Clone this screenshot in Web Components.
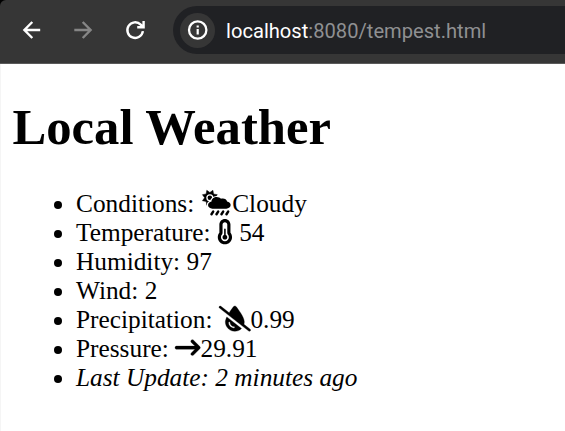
<!DOCTYPE html>
<html lang="en">
<head>
<meta charset="utf-8">
<title>Local Weather</title>
<style>
html,body{margin:0;height:100%;background:#fff;overflow:hidden}
</style>
</head>
<body>
<weather-window></weather-window>
<script>
const define = (name, html) => customElements.define(name, class extends HTMLElement {
  connectedCallback() {
    if (this.shadowRoot) return;
    this.attachShadow({mode: 'open'}).innerHTML = html;
  }
});

const glyphs = {
  cloud: [640, `<path d="M221 14L234 89L309 102L265 164L309 226L234 239L221 314L159 270L97 314L84 239L9 226L53 164L9 102L84 89L97 14L159 58z" transform="translate(20 -8)" stroke="#000" stroke-width="10" stroke-linejoin="round"/>
   <circle cx="179" cy="156" r="72" fill="#fff"/><circle cx="179" cy="156" r="46"/>
   <path d="M510.500 225.500c-6.900-37.200-39.300-65.500-78.500-65.500-12.300 0-23.900 3-34.300 8-17.400-24.100-45.600-40-77.700-40-53 0-96 43-96 96 0 .5.2 1.100.2 1.600C187.600 233 160 265.200 160 304c0 44.200 35.800 80 80 80h256c44.200 0 80-35.800 80-80 0-39.200-28.200-71.700-65.500-78.500z" transform="translate(-34 24) scale(1.1 .92)" stroke="#fff" stroke-width="44" paint-order="stroke"/>
   <path d="M246 436l-34 54M347 436l-34 54M448 436l-34 54M549 436l-34 54" fill="none" stroke="#000" stroke-width="50" stroke-linecap="round"/>`],
  temp: [320, `<path fill-rule="evenodd" d="M160 64c-26.500 0-48 21.500-48 48V276.500c0 17.300-7.100 31.900-15.300 42.500C86.200 332.600 80 349.500 80 368c0 44.200 35.800 80 80 80s80-35.800 80-80c0-18.500-6.200-35.400-16.700-48.900c-8.200-10.600-15.300-25.200-15.300-42.500V112c0-26.500-21.500-48-48-48zM48 112C48 50.200 98.100 0 160 0s112 50.100 112 112V276.500c0 .1 .1 .3 .2 .6c.2 .6 .8 1.600 1.700 2.800c18.900 24.400 30.100 55 30.100 88.100c0 79.500-64.500 144-144 144S16 447.500 16 368c0-33.200 11.200-63.800 30.100-88.100c.9-1.200 1.500-2.200 1.700-2.800c.1-.3 .2-.5 .2-.6V112z"/><path d="M208 368c0 26.500-21.500 48-48 48s-48-21.500-48-48c0-20.900 13.400-38.700 32-45.300V208c0-8.800 7.200-16 16-16s16 7.200 16 16V322.700c18.600 6.600 32 24.400 32 45.300z"/>`],
  drop: [640, `<path fill-rule="evenodd" d="M320 512c53.200 0 101.400-21.600 136.100-56.600l-298.300-235C140 257.100 128 292.300 128 320c0 106 86 192 192 192zM505.200 370.700c4.400-16.200 6.800-33.100 6.800-50.700c0-91.200-130.200-262.300-166.600-308.300C339.400 4.200 330.500 0 320.900 0h-1.800c-9.600 0-18.500 4.200-24.500 11.700C277.800 33 240.700 81.300 205.800 136L38.800 5.100C28.400-3.100 13.300-1.200 5.100 9.200S-1.200 34.700 9.200 42.900l592 464c10.400 8.200 25.500 6.300 33.700-4.100s6.300-25.500-4.100-33.700L505.200 370.700zM224 336c0 44.200 35.800 80 80 80c8.800 0 16 7.200 16 16s-7.200 16-16 16c-61.900 0-112-50.100-112-112c0-8.800 7.200-16 16-16s16 7.200 16 16z" stroke="#000" stroke-width="6"/>`],
  arrow: [512, `<path d="M502.600 278.600c12.500-12.500 12.500-32.800 0-45.300l-128-128c-12.500-12.500-32.800-12.500-45.300 0s-12.500 32.800 0 45.300L402.700 224 32 224c-17.700 0-32 14.300-32 32s14.300 32 32 32l370.700 0-73.400 73.400c-12.500 12.500-12.500 32.800 0 45.300s32.800 12.500 45.300 0l128-128z" stroke="#000" stroke-width="6"/>`]
};

customElements.define('weather-icon', class extends HTMLElement {
  connectedCallback() {
    if (this.shadowRoot) return;
    const [w, body] = glyphs[this.getAttribute('name')];
    this.attachShadow({mode: 'open'}).innerHTML = `<style>
      :host{display:inline-block;height:1em;width:${w / 512}em;vertical-align:-.125em;line-height:1}
      svg{display:block;width:100%;height:100%;overflow:visible}</style>
      <svg viewBox="0 0 ${w} 512">${body}</svg>`;
  }
});

define('address-bar', `<style>
  :host{display:flex;align-items:center;box-sizing:border-box;height:48px;width:420px;padding-left:7px;border-radius:24px;background:#202124;font:20.150px/48px Roboto,sans-serif;color:#8f9092;white-space:pre}
  .info{display:flex;align-items:center;justify-content:center;width:35px;height:35px;border-radius:50%;background:#363636;margin-right:11px}
  svg{display:block}
  ::slotted(b){font-weight:400;color:#fff}
  .url{display:block;padding-top:1px}
  </style><span class="info"><svg width="22" height="22" viewBox="0 0 22 22"><circle cx="10.700" cy="11" r="8.700" fill="none" stroke="#fff" stroke-width="2.300"/><path d="M9.600 10h2.200v5.500H9.600zM9.600 6.400h2.200v2.200H9.600z" fill="#fff"/></svg></span><span class="url"><slot></slot></span>`);

define('browser-toolbar', `<style>
  :host{display:flex;align-items:center;box-sizing:border-box;height:64px;padding:0 0 3px 20px;background:#363636;border-bottom:1px solid #5a5a5a;border-top-left-radius:6px;overflow:hidden}
  svg{display:block;flex:none;fill:none;stroke:#fff;stroke-width:2.400}
  .back{margin-right:28px}.fwd{stroke:#868686;margin-right:28px}.reload{margin-right:25px}
  address-bar{flex:none}
  </style>
  <svg class="back" width="24" height="24" viewBox="0 0 24 24"><path d="M20.200 12H4.500M12.300 4L4.400 12l7.900 8"/></svg>
  <svg class="fwd" width="24" height="24" viewBox="0 0 24 24"><path d="M2.300 12H18.500M10.700 4l7.900 8-7.900 8"/></svg>
  <svg class="reload" width="24" height="24" viewBox="0 0 24 24"><path d="M18.900 13.200A7.800 7.800 0 1 1 16.700 6.600L19.200 9.100M19.600 3.100V9.200H13.200"/></svg>
  <address-bar><b>localhost</b>:8080/tempest.html</address-bar>`);

define('weather-report', `<style>
  :host{display:block;padding:34px 12px 0;border-left:1px solid #f5f5f5;margin-right:-20px;font:25.330px/29px "Liberation Serif",serif;color:#000}
  h1{font-size:50.660px;line-height:59px;margin:0 0 32px -.5px}
  ul{margin:0 0 0 -.7px;padding-left:63.700px}
  </style>
  <h1>Local Weather</h1>
  <ul>
    <li>Conditions: <weather-icon name="cloud"></weather-icon>Cloudy</li>
    <li>Temperature: <weather-icon name="temp"></weather-icon> 54</li>
    <li>Humidity: 97</li>
    <li>Wind: 2</li>
    <li>Precipitation: <weather-icon name="drop"></weather-icon>0.99</li>
    <li>Pressure: <weather-icon name="arrow"></weather-icon>29.91</li>
    <li><i>Last Update: 2 minutes ago</i></li>
  </ul>`);

define('weather-window', `<style>
  :host{display:flex;flex-direction:column;height:431px;overflow:hidden;background:linear-gradient(#000 0 30px,#fff 30px)}
  browser-toolbar{flex:none}
  weather-report{flex:1}
  </style><browser-toolbar></browser-toolbar><weather-report></weather-report>`);
</script>
</body>
</html>
